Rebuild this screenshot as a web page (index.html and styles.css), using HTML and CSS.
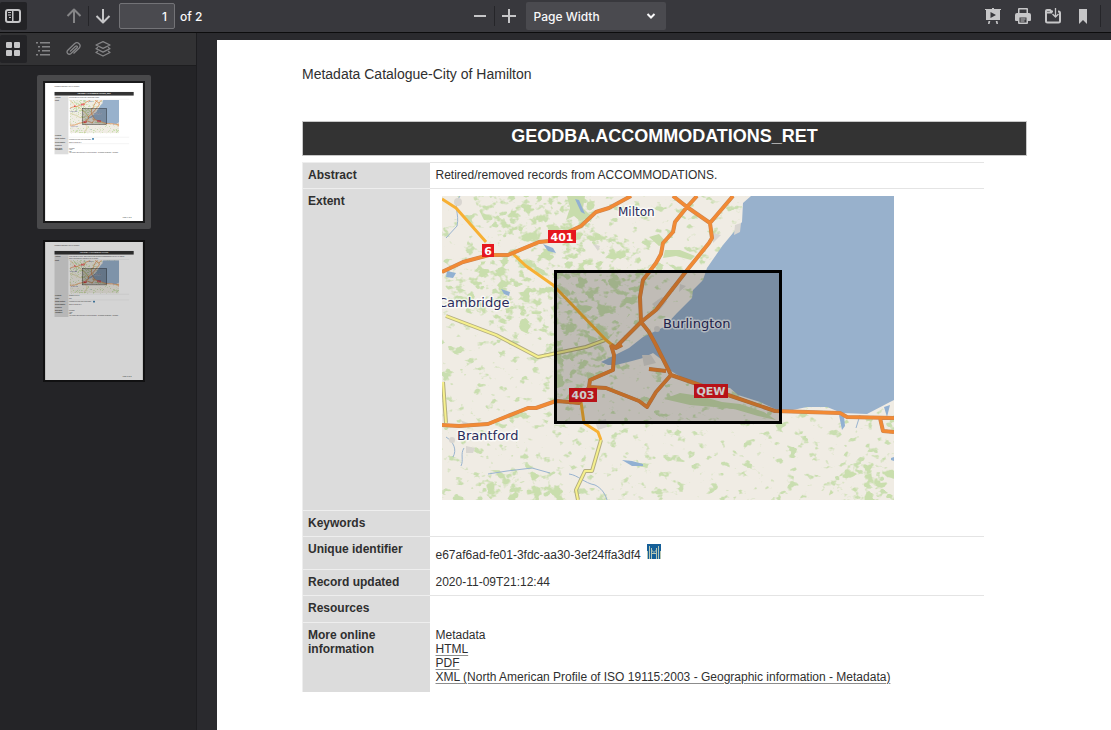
FILE: index.html
```html
<!DOCTYPE html>
<html lang="en">
<head>
<meta charset="utf-8">
<title>Metadata Catalogue-City of Hamilton</title>
<link rel="stylesheet" href="styles.css">
</head>
<body>
<header class="toolbar">
  <div class="group group-left">
    <button class="tool active" type="button" aria-label="Toggle sidebar"><svg viewBox="0 0 16 16"><path fill-rule="evenodd" d="M3 1h10a3 3 0 0 1 3 3v8a3 3 0 0 1-3 3H3a3 3 0 0 1-3-3V4a3 3 0 0 1 3-3zm0 2a1 1 0 0 0-1 1v8a1 1 0 0 0 1 1h4V3zm5.500 0v10H13a1 1 0 0 0 1-1V4a1 1 0 0 0-1-1z"/><path d="M3 4h3v1H3zM3 6.500h3v1H3zM4 9h2v1H4z"/></svg></button>
    <div class="pager">
      <button class="tool dim" type="button" aria-label="Previous page"><svg viewBox="0 0 16 16" class="line"><path d="M8 15V1.500M1.500 8 8 1.500 14.500 8"/></svg></button>
      <span class="divider"></span>
      <button class="tool" type="button" aria-label="Next page"><svg viewBox="0 0 16 16" class="line"><path d="M8 1v13.500M1.500 8 8 14.500 14.500 8"/></svg></button>
      <input class="page-number" id="page" type="text" value="1" aria-label="Page">
      <label class="page-count" for="page">of 2</label>
    </div>
  </div>
  <div class="group group-center">
    <button class="tool" type="button" aria-label="Zoom out"><svg viewBox="0 0 16 16" class="line"><path d="M2 8h12"/></svg></button>
    <span class="divider"></span>
    <button class="tool" type="button" aria-label="Zoom in"><svg viewBox="0 0 16 16" class="line"><path d="M1 8h14M8 1v14"/></svg></button>
    <span class="select-wrap">
      <select aria-label="Zoom"><option>Page Width</option><option>Page Fit</option><option>100%</option></select>
      <svg viewBox="0 0 10 10" class="chevron"><path d="M1.500 3 5 6.500 8.500 3"/></svg>
    </span>
  </div>
  <div class="group group-right">
    <button class="tool" type="button" aria-label="Presentation mode"><svg viewBox="0 0 16 16"><path fill-rule="evenodd" d="M0 1h7V0h2v1h7v1h-1v10H1V2H0zm5.500 3v6L11 7z"/><path d="M3.500 13h1.800l-.8 3H3zM10.700 13h1.800l.5 3h-1.500z"/></svg></button>
    <button class="tool" type="button" aria-label="Print"><svg viewBox="0 0 16 16"><path d="M4 0h8a1 1 0 0 1 1 1v4h1a2 2 0 0 1 2 2v5a1 1 0 0 1-1 1h-2v2a1 1 0 0 1-1 1H4a1 1 0 0 1-1-1v-2H1a1 1 0 0 1-1-1V7a2 2 0 0 1 2-2h1V1a1 1 0 0 1 1-1z"/><path class="cut" d="M4.500 1.500h7V5h-7zM4.500 9.500h7v5h-7z"/><path d="M5.500 10.500h5v1h-5zM5.500 12.500h4v1h-4z"/></svg></button>
    <button class="tool" type="button" aria-label="Save"><svg viewBox="0 0 16 16" class="line"><path d="M8 3.500H6.500L5 2H2a1 1 0 0 0-1 1V13a1.500 1.500 0 0 0 1.500 1.500h11A1.500 1.500 0 0 0 15 13V5A1.500 1.500 0 0 0 13.500 3.500H13M1 4.500h6"/><path class="thin" d="M10.500 0v9M7.500 6l3 3 3-3"/></svg></button>
    <button class="tool" type="button" aria-label="Current view"><svg viewBox="0 0 16 16"><path d="M4 1h8v15l-4-4-4 4z"/></svg></button>
    <span class="divider tall"></span>
  </div>
</header>

<div class="workspace">
  <aside class="sidebar">
    <nav class="side-tools">
      <button class="tool active" type="button" aria-label="Thumbnails"><svg viewBox="0 0 16 16"><rect x="1" y="1" width="6" height="6" rx="1"/><rect x="9" y="1" width="6" height="6" rx="1"/><rect x="1" y="9" width="6" height="6" rx="1"/><rect x="9" y="9" width="6" height="6" rx="1"/></svg></button>
      <button class="tool dim" type="button" aria-label="Outline"><svg viewBox="0 0 16 16"><path d="M1 1h2v1.500H1zM5 1h10v1.500H5zM3 5h2v1.500H3zM7 5h8v1.500H7zM3 9h2v1.500H3zM7 9h8v1.500H7zM1 13h2v1.500H1zM5 13h10v1.500H5z"/></svg></button>
      <button class="tool dim" type="button" aria-label="Attachments"><svg viewBox="0 0 16 16" class="line"><path class="thin" d="m5 10.500 5.500-5.200c1.200-1.100 2.500.3 1.500 1.400l-6 5.800c-2.300 2-5.500-.8-3.200-3.200l6.700-6.500c3.200-2.900 7.500 1.200 4.500 4.400l-5.500 5.300"/></svg></button>
      <button class="tool dim" type="button" aria-label="Layers"><svg viewBox="0 0 16 16" class="line"><path class="thin" d="m8 .7 7 3.300-7 3.300L1 4zM3 6.300 1 7.700l7 3.400 7-3.400-2-1.400M3 10 1 11.500l7 3.500 7-3.500-2-1.500"/></svg></button>
    </nav>
    <div class="thumbs">
      <a class="thumb selected" href="#p1" aria-label="Page 1">
        <svg class="thumb-page" viewBox="0 0 894 1262">
          <rect width="894" height="1262" fill="#fff"/>
          <g class="mini">
            <text x="85" y="39" font-size="14">Metadata Catalogue-City of Hamilton</text>
            <rect x="86" y="82" width="724" height="33"/>
            <text x="448" y="103" class="mini-title">GEODBA.ACCOMMODATIONS_RET</text>
            <rect x="86" y="122" width="127" height="530" class="mini-label"/>
            <path d="M213 148h555M213 496h555M213 555h555" stroke="#ddd" stroke-width="3"/>
            <g class="mini-bold"><text x="91" y="138">Abstract</text><text x="91" y="165">Extent</text><text x="91" y="487">Keywords</text><text x="91" y="513">Unique identifier</text><text x="91" y="546">Record updated</text><text x="91" y="572">Resources</text><text x="91" y="599">More online</text><text x="91" y="613">information</text></g>
            <text x="219" y="138">Retired/removed records from ACCOMMODATIONS.</text>
            <text x="219" y="519">e67af6ad-fe01-3fdc-aa30-3ef24ffa3df4</text>
            <rect x="431" y="504" width="14" height="15" fill="#17659c"/>
            <text x="219" y="546">2020-11-09T21:12:44</text>
            <text x="219" y="599">Metadata</text><text x="219" y="613">HTML</text><text x="219" y="628">PDF</text>
            <text x="219" y="642">XML (North American Profile of ISO 19115:2003 - Geographic information - Metadata)</text>
            <text x="711" y="1236" font-size="16">page 1 of 2</text>
          </g>
          <use href="#map" x="225" y="156" width="452" height="304"/>
        </svg>
      </a>
      <a class="thumb" href="#p2" aria-label="Page 2">
        <svg class="thumb-page" viewBox="0 0 894 1262">
          <rect width="894" height="1262" fill="#fff"/>
          <g class="mini">
            <text x="85" y="39" font-size="14">Metadata Catalogue-City of Hamilton</text>
            <rect x="86" y="82" width="724" height="33"/>
            <text x="448" y="103" class="mini-title">GEODBA.ACCOMMODATIONS</text>
            <rect x="86" y="122" width="127" height="564" class="mini-label"/>
            <path d="M213 160h555M213 478h555M213 530h555" stroke="#ddd" stroke-width="3"/>
            <g class="mini-bold"><text x="91" y="138">Abstract</text><text x="91" y="175">Extent</text><text x="91" y="497">Keywords</text><text x="91" y="520">Theme</text><text x="91" y="550">Unique identifier</text><text x="91" y="580">Record updated</text><text x="91" y="606">Resources</text><text x="91" y="634">More online</text><text x="91" y="648">information</text></g>
            <text x="219" y="138">Point locations for hotels, motels and bed and breakfast accommodations in the City of Hamilton</text>
            <text x="219" y="154">Owner and updated by Tourism for the city website.</text>
            <text x="219" y="497">Tourism, Services</text><text x="219" y="520">hotel</text>
            <text x="219" y="553">e67af6ad-fe01-3fdc-aa30-3ef24ffa3df4</text>
            <rect x="440" y="538" width="14" height="15" fill="#17659c"/>
            <text x="219" y="580">2020-11-09T21:12:44</text>
            <text x="219" y="634">Metadata</text><text x="219" y="648">HTML</text><text x="219" y="663">PDF</text>
            <text x="219" y="677">XML (North American Profile of ISO 19115:2003 - Geographic information - Metadata)</text>
            <text x="711" y="1236" font-size="16">page 2 of 2</text>
          </g>
          <use href="#map" x="225" y="166" width="452" height="304"/>
        </svg>
      </a>
    </div>
  </aside>

  <main class="viewer">
    <article class="sheet" id="p1">
      <p class="catalogue">Metadata Catalogue-City of Hamilton</p>
      <h1>GEODBA.ACCOMMODATIONS_RET</h1>
      <table class="record">
        <tr><th scope="row">Abstract</th><td class="ruled">Retired/removed records from ACCOMMODATIONS.</td></tr>
        <tr><th scope="row">Extent</th><td class="extent">
          <svg class="map" viewBox="0 0 452 304" role="img" aria-label="Map of the Hamilton area">
            <defs>
              <filter id="woods-dense" x="0" y="0" width="100%" height="100%" color-interpolation-filters="sRGB">
                <feTurbulence type="fractalNoise" baseFrequency=".09 .11" numOctaves="3" seed="8"/>
                <feColorMatrix values="0 0 0 0 .79  0 0 0 0 .87  0 0 0 0 .68  9 0 0 0 -4.700"/>
              </filter>
              <filter id="woods-sparse" x="0" y="0" width="100%" height="100%" color-interpolation-filters="sRGB">
                <feTurbulence type="fractalNoise" baseFrequency=".09 .12" numOctaves="3" seed="21"/>
                <feColorMatrix values="0 0 0 0 .79  0 0 0 0 .87  0 0 0 0 .69  9 0 0 0 -5.500"/>
              </filter>
              <clipPath id="dense-area"><path d="M30 0H155L148 30 190 45 205 75 195 110 165 145 165 165 145 200 114 205 110 150 70 130 20 115 0 85 10 68 60 64 75 45 50 40zM25 285 45 274 95 275 118 292 130 304H50zM392 285 415 262 435 258 452 275V304H385z"/></clipPath>
              <symbol id="map" viewBox="0 0 452 304">
                <rect width="452" height="304" fill="#f0ece4"/>
                <rect width="452" height="304" filter="url(#woods-sparse)"/>
                <g clip-path="url(#dense-area)"><rect width="452" height="304" filter="url(#woods-dense)"/></g>
                <g fill="#c8dcac"><path d="m125 0 18 0-2 12 9 9-12 4-6-5-8 4 4-12zM207 41l10-3 8 9-8 3zM223 54l15 0 15 6-4 4-15-4-13 2zM222 203l16-6 20 3 22 6 18 2 24 8 12 8-18-4-24-7-20-2-24-2z"/></g>
                <path fill="#98b1cc" d="M309 0 301 7 300 26 296 31 281 49 265 72 261 84 251 94 250 102 235 117 222 131 201 141 187 152 159 166 166 169 174 169 190 165 201 162 211 157 219 163 224 172 234 178 253 189 288 192 296 199 318 206 331 212 341 216 365 211 385 211 400 217 425 218 448 206 452 204V0z"/>
                <g fill="#91b0d2"><path d="m133 3 4 1 6 14-4-2zM101 48l10 4 3 5-8-2zM5 75l9 2-3 5-7-1zM59 93l9 3-1 4-5-2zM397 219l5 1 1 10-3 4zM442 211l6-2-3 12zM449 262l3-1v4l-3-1zM180 264l10 1 11 3v2l-11 0z"/></g>
                <g class="stream"><path d="M46 278 65 275 90 272 108 277M127 278c9 1 15 9 26 11 6 3 10 8 12 15M4 241c8 5 11 13 7 20M22 252c-4 6 0 12-3 18M418 219l-4 13M18 0c-8 10 0 17-3 30L4 42"/></g>
                <g fill="#d9d6d1"><circle cx="16" cy="6" r="4"/><circle cx="10" cy="244" r="3"/><path d="m200 159 9 0 5 8-12 3zM153 226l11-3 1 8-9 3zM293 29l6-2-1 9-6 3zM18 224l8 3-2 5zM271 37l8 2-8 8zM151 48l7 2-2 5zM210 108l10-7 5 4-8 10zM238 88l6 2-7 6zM24 250l9 2-2 5-7 0z"/><circle cx="215" cy="133" r="3"/></g>
                <g class="road-case"><path d="M4 120 54 139 96 161 144 151 163 144M159 244 150 275 143 275 134 294 136 304M1 186 4 227"/></g>
                <g class="road-yellow"><path d="M4 120 54 139 96 161 144 151 163 144M159 244 150 275 143 275 134 294 136 304M1 186 4 227"/></g>
                <g class="road-amber"><path d="M0 3 14 12 44 46M70 57 84 70 111 89 164 144 174 152M139 206 142 227 156 236 159 244"/></g>
                <g class="road-casing"><path id="roads" d="M0 76 21 66 47 59 66 59 97 46 107 45 139 30 154 16 167 12 189 0M255 0 245 11 233 26 231 36 221 47 219 58 214 67 201 84 198 101 199 126M231 0 245 11 268 27 291 0M268 27 270 42 267 47 246 73 218 109 214 114 199 126 174 151M169 149 172 159 171 174 148 184 147 191 137 207 127 206 114 205 94 212 86 212 46 228 17 230 0 229M169 149 174 152 180 149M199 126 207 136 214 149 229 179 255 188 286 199 333 215 398 217 405 221 452 222M438 222 441 235 452 236M147 191 164 192 197 205 205 211 214 196 229 179M207 173 224 175"/></g>
                <use href="#roads" class="road-orange"/>
                <g class="place"><text x="176" y="20" font-size="12">Milton</text><text x="-4" y="111">Cambridge</text><text x="221" y="132">Burlington</text><text x="15" y="244">Brantford</text></g>
                <g fill="#e6171f"><rect x="40" y="48" width="12" height="13"/><rect x="106" y="34" width="28" height="13"/><rect x="127" y="192" width="28" height="14"/><rect x="252" y="188" width="34" height="14"/></g>
                <g class="shield"><text x="46" y="59">6</text><text x="120" y="45">401</text><text x="141" y="203">403</text><text x="269" y="199">QEW</text></g>
                <rect x="113.500" y="75.500" width="225" height="151" fill="#000" fill-opacity=".2" stroke="#000" stroke-width="3"/>
              </symbol>
            </defs>
            <use href="#map" width="452" height="304"/>
          </svg></td></tr>
        <tr><th scope="row">Keywords</th><td class="ruled"></td></tr>
        <tr class="identifier"><th scope="row">Unique identifier</th><td>e67af6ad-fe01-3fdc-aa30-3ef24ffa3df4 <svg class="badge" viewBox="0 0 14 15" role="img" aria-label="City of Hamilton"><rect width="14" height="15" fill="#155f98"/><path d="M2.500 2v13M4.500 4v11M9.500 4v11M11.500 2v13M4.500 9.500h5M4.500 6 7 8.500 9.500 6M.5 7v8M13.500 7v8" fill="none" stroke="#b7c7b5"/></svg></td></tr>
        <tr><th scope="row">Record updated</th><td class="ruled">2020-11-09T21:12:44</td></tr>
        <tr class="resources"><th scope="row">Resources</th><td></td></tr>
        <tr class="online"><th scope="row">More online information</th><td>
          <ul><li>Metadata</li><li><a href="#html">HTML</a></li><li><a href="#pdf">PDF</a></li><li><a href="#xml">XML (North American Profile of ISO 19115:2003 - Geographic information - Metadata)</a></li></ul></td></tr>
      </table>
    </article>
  </main>
</div>
</body>
</html>
```

FILE: styles.css
```css
* { box-sizing: border-box; }
html, body { height: 100%; }
body {
  margin: 0;
  display: flex;
  flex-direction: column;
  background: #2a2a2e;
  font-family: "Liberation Sans", Arial, sans-serif;
  font-size: 12px;
  overflow: hidden;
}

/* Toolbar */
.toolbar {
  display: grid;
  grid-template-columns: 1fr auto 1fr;
  flex: none;
  height: 33px;
  background: #38383d;
  border-bottom: 1px solid #0c0c0d;
  color: #f9f9fa;
  font-family: Inter, sans-serif;
}
.group, .pager { display: flex; align-items: center; }
.pager { margin-left: 33px; }
.group-center { padding-left: 20px; }
.group-right { justify-content: flex-end; gap: 2px; padding-right: 10px; }
.tool {
  display: grid;
  place-items: center;
  flex: none;
  width: 28px;
  height: 28px;
  padding: 0;
  border: 0;
  border-radius: 2px;
  background: none;
  color: #c6c6c8;
}
.tool svg { width: 16px; height: 16px; fill: currentColor; }
.tool svg.line { fill: none; stroke: currentColor; stroke-width: 2; stroke-linejoin: round; }
.tool .thin { stroke-width: 1.3; }
.tool .cut { fill: #38383d; }
.tool.dim { color: #858587; }
.tool.active { width: 27px; padding-right: 1px; background: #232326; }
.divider { width: 1px; height: 20px; background: #252529; }
.divider.tall { height: 22px; margin-left: 1px; }
.page-number {
  width: 56px;
  height: 26px;
  margin-left: 2px;
  padding: 0 7px;
  border: 1px solid #737377;
  border-radius: 2px;
  background: #4a4a4f;
  color: inherit;
  font: 500 12px Inter, sans-serif;
  text-align: right;
}
.page-count { margin-left: 5px; font-weight: 500; }
.select-wrap { position: relative; margin-left: 3px; }
.select-wrap select {
  appearance: none;
  display: block;
  width: 140px;
  height: 28px;
  padding: 0 8px;
  border: 0;
  border-radius: 2px;
  background: #4a4a4f;
  color: inherit;
  font: 500 12px Inter, sans-serif;
}
.chevron {
  position: absolute;
  top: 9px;
  right: 10px;
  width: 10px;
  height: 10px;
  fill: none;
  stroke: #f9f9fa;
  stroke-width: 2;
  pointer-events: none;
}

/* Sidebar */
.workspace { display: flex; flex: 1; min-height: 0; }
.sidebar { width: 197px; flex: none; background: #242427; border-right: 1px solid #1d1d20; }
.side-tools {
  display: flex;
  align-items: center;
  gap: 2px;
  height: 33px;
  background: #323234;
  border-bottom: 1px solid #1d1d1f;
}
.thumbs { display: flex; flex-direction: column; align-items: center; gap: 5px; padding: 9px 8px 0 0; }
.thumb { display: block; padding: 8px; border-radius: 2px; }
.thumb.selected { background: #49494b; }
.thumb-page { display: block; width: 98px; height: 138px; outline: 2px solid #1a1a1b; }
.thumb:not(.selected) .thumb-page { filter: brightness(.83); outline-color: #151516; }
.mini { fill: #333; font-size: 12px; }
.mini-label { fill: #dcdcdc; }
.mini-bold { font-weight: 700; }
.mini-title { fill: #fff; font-size: 18px; font-weight: 700; text-anchor: middle; }

/* Document */
.viewer { flex: 1; min-width: 0; padding: 7px 0 0 20px; overflow: hidden; }
.sheet { min-height: 100%; padding: 26px 84px 38px 85px; background: #fff; color: #2f2f2f; }
.catalogue { margin: 0 0 39px; font-size: 14px; line-height: 16px; }
h1 {
  margin: 0;
  border: 1px solid #c8c8c8;
  background: #333;
  color: #fff;
  font-size: 18px;
  line-height: 28px;
  padding-bottom: 5px;
  text-align: center;
}
.record { width: 94%; margin-top: 6px; border-collapse: collapse; line-height: 14px; }
.record th, .record td { padding: 5px 6px 6px; text-align: left; vertical-align: top; }
.record th { width: 127px; padding-left: 5px; border: 1px solid #eee; border-width: 1px 0 0 1px; background: #dcdcdc; }
.record tr { height: 26px; }
.record .ruled { border-top: 1px solid #fff; border-bottom: 1px solid #e4e4e4; }
.record tr:first-child .ruled { border-top: 1px solid #e4e4e4; }
.record .extent { padding: 7px 12px 10px; }
.map { display: block; width: 100%; max-width: 452px; height: auto; }
.record .identifier td { padding: 7px 6px; }
.badge { width: 14px; height: 15px; margin-left: 3px; }
.record .resources { height: 27px; }
.record .online td, .record .online th { padding-bottom: 8px; }
ul { list-style: none; margin: 0; padding: 0; }
.record a { color: inherit; text-decoration: underline; text-decoration-color: #8c8c8c; text-decoration-thickness: 1px; text-underline-offset: 2px; }

/* Map layers */
.stream { fill: none; stroke: #9ab4d0; stroke-width: 1; }
.road-case, .road-yellow, .road-amber, .road-casing, .road-orange { fill: none; stroke-linejoin: round; }
.road-case { stroke: #b3ae80; stroke-width: 4; }
.road-yellow { stroke: #f6f08c; stroke-width: 2; }
.road-amber { stroke: #f7b033; stroke-width: 3; }
.road-casing { stroke: #c98554; stroke-width: 4; }
.road-orange { stroke: #f28a34; stroke-width: 3; }
.place { font: 13px "DejaVu Sans", sans-serif; fill: #2b2b5c; stroke: #fff; stroke-opacity: .7; stroke-width: 3; stroke-linejoin: round; paint-order: stroke; }
.shield { font: bold 11px "DejaVu Sans", sans-serif; fill: #fff; text-anchor: middle; }
```
